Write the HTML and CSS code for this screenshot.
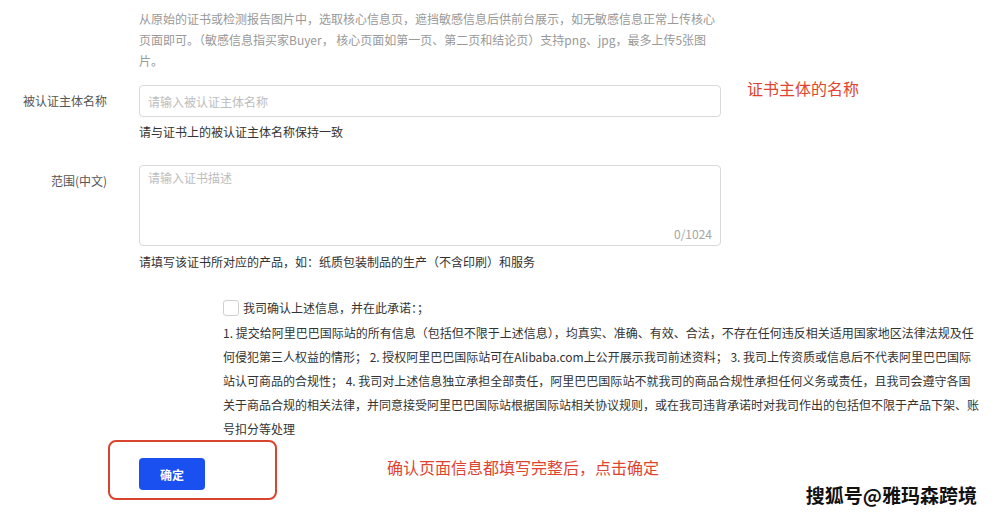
FILE: index.html
```html
<!DOCTYPE html>
<html lang="zh-CN">
<head>
  <meta charset="UTF-8">
  <meta name="viewport" content="width=device-width, initial-scale=1.0">
  <title>证书信息</title>
  <link rel="stylesheet" href="styles.css">
</head>
<body>
  <div class="page">
    <p class="upload-tip">从原始的证书或检测报告图片中，选取核心信息页，遮挡敏感信息后供前台展示，如无敏感信息正常上传核心页面即可。（敏感信息指买家Buyer， 核心页面如第一页、第二页和结论页）支持png、jpg，最多上传5张图片。</p>

    <div class="form-row">
      <label class="form-label" for="subject">被认证主体名称</label>
      <div class="form-field">
        <input type="text" id="subject" class="text-input" placeholder="请输入被认证主体名称">
        <p class="field-help">请与证书上的被认证主体名称保持一致</p>
      </div>
      <span class="note note-top">证书主体的名称</span>
    </div>

    <div class="form-row form-row-scope">
      <label class="form-label" for="scope">范围(中文)</label>
      <div class="form-field">
        <div class="textarea-wrap">
          <textarea id="scope" class="text-area" placeholder="请输入证书描述"></textarea>
          <span class="counter">0/1024</span>
        </div>
        <p class="field-help help-scope">请填写该证书所对应的产品，如：纸质包装制品的生产（不含印刷）和服务</p>
      </div>
    </div>

    <div class="agreement">
      <label class="check-line">
        <span class="check-box"></span>
        <span>我司确认上述信息，并在此承诺：；</span>
      </label>
      <p class="agreement-text">1. 提交给阿里巴巴国际站的所有信息（包括但不限于上述信息），均真实、准确、有效、合法，不存在任何违反相关适用国家地区法律法规及任何侵犯第三人权益的情形； 2. 授权阿里巴巴国际站可在Alibaba.com上公开展示我司前述资料； 3. 我司上传资质或信息后不代表阿里巴巴国际站认可商品的合规性； 4. 我司对上述信息独立承担全部责任，阿里巴巴国际站不就我司的商品合规性承担任何义务或责任，且我司会遵守各国关于商品合规的相关法律，并同意接受阿里巴巴国际站根据国际站相关协议规则，或在我司违背承诺时对我司作出的包括但不限于产品下架、账号扣分等处理</p>
    </div>

    <div class="actions">
      <div class="mark-box">
        <button type="button" class="submit-button">确定</button>
      </div>
      <span class="note note-submit">确认页面信息都填写完整后，点击确定</span>
    </div>

    <span class="watermark">搜狐号@雅玛森跨境</span>
  </div>
</body>
</html>
```

FILE: styles.css
```css
* {
  box-sizing: border-box;
  margin: 0;
  padding: 0;
}

body {
  font-family: "Noto Sans CJK SC", "Noto Sans", sans-serif;
  font-size: 12px;
  background-color: #fff;
  color: #333;
}

.page {
  position: relative;
  width: 998px;
  height: 518px;
  padding-top: 8px;
  overflow: hidden;
}

.upload-tip {
  margin-left: 139px;
  width: 582px;
  line-height: 21px;
  color: #999;
}

.form-row {
  display: flex;
  align-items: flex-start;
  margin-top: 14px;
}

.form-row-scope {
  margin-top: 23px;
}

.form-label {
  width: 107px;
  line-height: 32px;
  text-align: right;
  color: #555;
}

.form-field {
  width: 582px;
  margin-left: 32px;
}

.text-input {
  display: block;
  width: 100%;
  height: 32px;
  padding: 0 8px;
  border: 1px solid #d9d9d9;
  border-radius: 4px;
  font: inherit;
  color: #333;
}

.text-input::placeholder,
.text-area::placeholder {
  color: #bdbdbd;
}

.field-help {
  margin-top: 5px;
  line-height: 20px;
  color: #333;
}

.help-scope {
  margin-top: 6px;
}

.textarea-wrap {
  position: relative;
}

.text-area {
  display: block;
  width: 100%;
  height: 81px;
  padding: 2px 8px;
  border: 1px solid #d9d9d9;
  border-radius: 4px;
  font: inherit;
  line-height: 20px;
  resize: none;
}

.counter {
  position: absolute;
  right: 9px;
  bottom: 2px;
  line-height: 20px;
  color: #a6a6a6;
}

.note {
  margin-left: 26px;
  font-size: 16px;
  line-height: 22px;
  color: #e0442f;
}

.note-top {
  margin-top: -8px;
}

.agreement {
  margin-left: 223px;
  margin-top: 26px;
  width: 756.5px;
}

.check-line {
  display: flex;
  align-items: center;
  gap: 4px;
  line-height: 20px;
}

.check-box {
  width: 16px;
  height: 16px;
  border: 1px solid #d0d0d0;
  border-radius: 3px;
  background: #fff;
}

.agreement-text {
  margin-top: 3px;
  line-height: 24px;
}

.actions {
  display: flex;
  align-items: flex-start;
  margin-top: -1px;
}

.mark-box {
  margin-left: 108px;
  padding: 16px 70px 8px 29px;
  border: 2px solid #d9442f;
  border-radius: 8px;
}

.submit-button {
  display: block;
  width: 66px;
  height: 32px;
  border: none;
  border-radius: 4px;
  background-color: #1a4ff0;
  color: #fff;
  font: inherit;
  font-weight: bold;
  cursor: pointer;
}

.note-submit {
  margin-left: 110px;
  margin-top: 16px;
}

.watermark {
  position: absolute;
  right: 21px;
  bottom: 10px;
  font-size: 19px;
  font-weight: bold;
  color: #111;
  text-shadow: 1px 1px 0 #fff, -1px -1px 0 #fff, 1px -1px 0 #fff, -1px 1px 0 #fff;
}
```
